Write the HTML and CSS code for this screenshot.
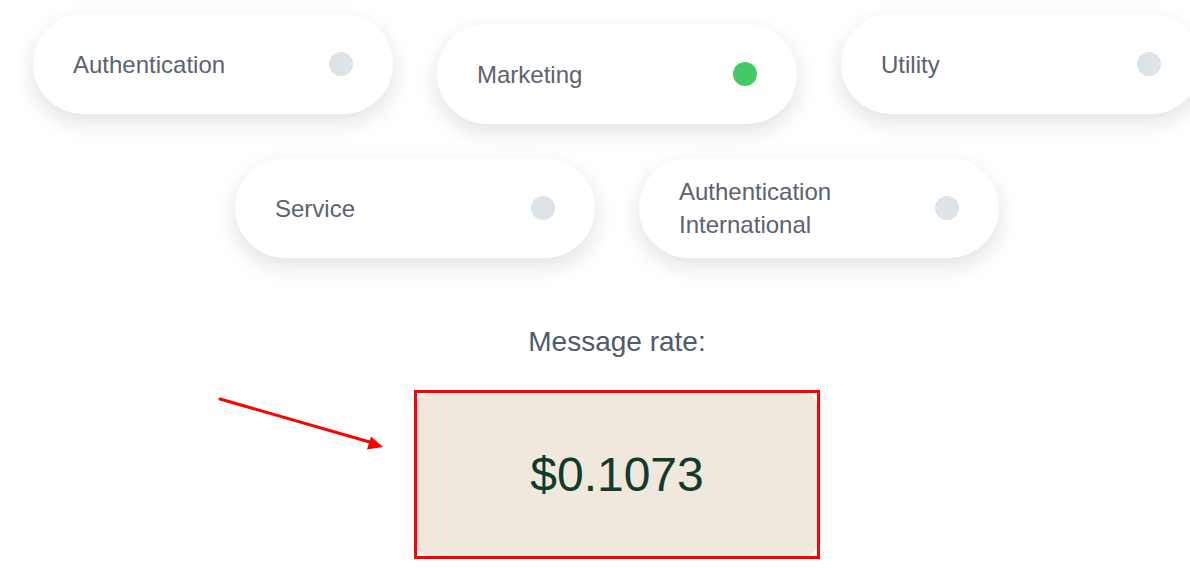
FILE: index.html
```html
<!DOCTYPE html>
<html lang="en">
<head>
<meta charset="utf-8">
<title>Message rate</title>
<link rel="stylesheet" href="styles.css">
</head>
<body>
<div class="page">
  <div class="options">
    <div class="pill"><span class="label">Authentication</span><span class="dot"></span></div>
    <div class="pill selected"><span class="label">Marketing</span><span class="dot on"></span></div>
    <div class="pill"><span class="label">Utility</span><span class="dot"></span></div>
    <div class="pill"><span class="label">Service</span><span class="dot"></span></div>
    <div class="pill"><span class="label">Authentication International</span><span class="dot"></span></div>
  </div>
  <div class="rate">
    <div class="rate-title">Message rate:</div>
    <div class="highlight">
      <div class="price">$0.1073</div>
    </div>
  </div>
  <svg class="arrow" width="200" height="70" viewBox="0 0 200 70">
    <line x1="10" y1="9" x2="163" y2="53" stroke="#ff0000" stroke-width="3" stroke-linecap="round"/>
    <polygon points="173,57 157,59.5 161,46.5" fill="#ff0000"/>
  </svg>
</div>
</body>
</html>
```
FILE: styles.css
```css
html, body {
  margin: 0;
  padding: 0;
  background: #ffffff;
}

body {
  font-family: "Liberation Sans", Arial, Helvetica, sans-serif;
}

.page {
  position: relative;
  width: 1190px;
  height: 576px;
  overflow: hidden;
}

.options {
  display: flex;
  flex-wrap: wrap;
  justify-content: center;
  gap: 44px 44px;
  width: 1168px;
  margin-left: 33px;
  padding-top: 14px;
}

.pill {
  box-sizing: border-box;
  width: 360px;
  height: 100px;
  border-radius: 50px;
  background: #ffffff;
  box-shadow: 0 8px 22px rgba(0, 0, 0, 0.12);
  display: flex;
  align-items: center;
  justify-content: space-between;
  padding: 0 40px;
  gap: 20px;
}

.pill.selected {
  transform: translateY(10px);
}

.label {
  font-size: 24px;
  line-height: 33px;
  color: #5b6270;
  max-width: 250px;
}

.dot {
  flex: 0 0 auto;
  width: 24px;
  height: 24px;
  border-radius: 50%;
  background: #dce4ea;
}

.dot.on {
  background: #42cb65;
}

.rate {
  width: 1168px;
  margin-left: 33px;
  display: flex;
  flex-direction: column;
  align-items: center;
  padding-top: 68px;
}

.rate-title {
  font-size: 28px;
  color: #4d5b6b;
  margin-bottom: 32px;
}

.highlight {
  border: 3px solid #ff0000;
}

.price {
  width: 400px;
  height: 163px;
  border-radius: 12px;
  background: #f0e8dd;
  display: flex;
  align-items: center;
  justify-content: center;
  font-size: 48px;
  color: #113b2b;
}

.arrow {
  position: absolute;
  left: 210px;
  top: 390px;
}
```
